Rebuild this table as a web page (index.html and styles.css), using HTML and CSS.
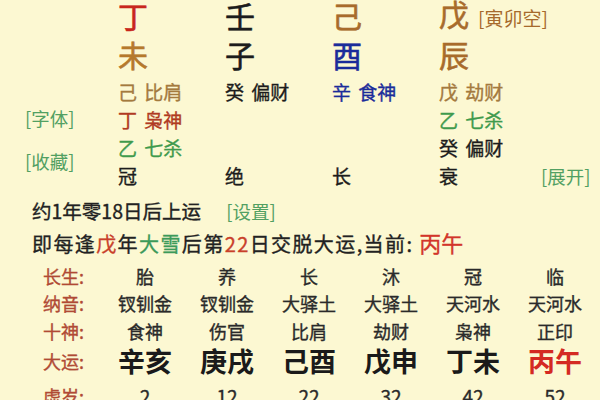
FILE: index.html
```html
<!DOCTYPE html>
<html lang="zh-CN">
<head>
<meta charset="utf-8">
<title>排盘</title>
<link rel="stylesheet" href="styles.css">
</head>
<body>
<div class="page">
  <div class="pillars">
    <div class="side">
      <span class="link first">[字体]</span>
      <span class="link second">[收藏]</span>
    </div>
    <span class="link expand">[展开]</span>

    <div></div>
    <div class="stem red">丁</div>
    <div class="stem black">壬</div>
    <div class="stem brown">己</div>
    <div class="stem brown">戊<span class="kong">[寅卯空]</span></div>
    <div></div>

    <div></div>
    <div class="stem orange">未</div>
    <div class="stem black">子</div>
    <div class="stem blue">酉</div>
    <div class="stem brown">辰</div>
    <div></div>

    <div></div>
    <div class="hide tan">己 比肩</div>
    <div class="hide black">癸 偏财</div>
    <div class="hide blue">辛 食神</div>
    <div class="hide tan">戊 劫财</div>
    <div></div>

    <div class="hide rust">丁 枭神</div>
    <div></div>
    <div></div>
    <div class="hide green">乙 七杀</div>
    <div></div>

    <div class="hide green">乙 七杀</div>
    <div></div>
    <div></div>
    <div class="hide black">癸 偏财</div>
    <div></div>

    <div class="hide black">冠</div>
    <div class="hide black">绝</div>
    <div class="hide black">长</div>
    <div class="hide black">衰</div>
  </div>

  <div class="info">
    <p class="line first-line">约1年零18日后上运 <span class="set">[设置]</span></p>
    <p class="line second-line">即每逢<span class="red2">戊</span>年<span class="green2">大雪</span>后第<span class="red2">22</span>日交脱大运,当前: <span class="now">丙午</span></p>
  </div>

  <div class="table">
    <div class="label">长生:</div>
    <div class="val">胎</div><div class="val">养</div><div class="val">长</div><div class="val">沐</div><div class="val">冠</div><div class="val">临</div>

    <div class="label">纳音:</div>
    <div class="val">钗钏金</div><div class="val">钗钏金</div><div class="val">大驿土</div><div class="val">大驿土</div><div class="val">天河水</div><div class="val">天河水</div>

    <div class="label">十神:</div>
    <div class="val">食神</div><div class="val">伤官</div><div class="val">比肩</div><div class="val">劫财</div><div class="val">枭神</div><div class="val">正印</div>

    <div class="label">大运:</div>
    <div class="val big">辛亥</div><div class="val big">庚戌</div><div class="val big">己酉</div><div class="val big">戊申</div><div class="val big">丁未</div><div class="val big cur">丙午</div>

    <div class="label">虚岁:</div>
    <div class="val num">2</div><div class="val num">12</div><div class="val num">22</div><div class="val num">32</div><div class="val num">42</div><div class="val num">52</div>
  </div>
</div>
</body>
</html>
```

FILE: styles.css
```css
html, body {
  margin: 0;
  padding: 0;
  background: #fcf8d2;
}
body {
  width: 600px;
  height: 400px;
  overflow: hidden;
  font-family: "Noto Sans CJK SC", sans-serif;
  color: #222;
  -webkit-text-stroke: 0.35px currentColor;
}
.page {
  width: 600px;
}
.pillars {
  display: grid;
  grid-template-columns: 118px 107px 107px 107px 107px 1fr;
  grid-template-rows: 30px 48px 28px 28px 28px 28px;
  align-items: center;
}
.side {
  grid-column: 1;
  grid-row: 4 / 7;
  align-self: stretch;
  display: flex;
  flex-direction: column;
  padding-left: 25px;
}
.link {
  color: #52a062;
  font-size: 18.5px;
  line-height: 28px;
  white-space: nowrap;
  -webkit-text-stroke: 0;
}
.first {
  margin-top: -2px;
}
.second {
  margin-top: 15px;
}
.expand {
  grid-column: 6;
  grid-row: 6;
  margin-left: -5px;
}
.stem {
  font-size: 30px;
  line-height: 30px;
  white-space: nowrap;
  -webkit-text-stroke: 0.6px currentColor;
}
.kong {
  font-size: 19px;
  color: #a66a2c;
  margin-left: 9px;
  -webkit-text-stroke: 0;
}
.hide {
  font-size: 19px;
  line-height: 28px;
  white-space: nowrap;
  word-spacing: 3px;
}
.red { color: #c8261c; }
.black { color: #1c1c1c; }
.brown { color: #a86b2b; }
.orange { color: #b5792c; }
.blue { color: #1b2c9a; }
.tan { color: #a47a3e; }
.rust { color: #b03a22; }
.green { color: #3f9a4c; }

.info {
  padding-left: 32px;
  margin-top: 5px;
}
.line {
  margin: 0;
  line-height: 31px;
  white-space: nowrap;
  color: #222;
}
.first-line {
  font-size: 19.5px;
}
.second-line {
  font-size: 20px;
  letter-spacing: 1.4px;
}
.set {
  color: #52a062;
  font-size: 18.5px;
  margin-left: 21px;
  letter-spacing: 0;
  -webkit-text-stroke: 0;
}
.red2 { color: #c9402a; }
.green2 { color: #3c9a5a; }
.now {
  color: #d2352a;
  font-size: 22px;
  letter-spacing: 0;
}

.table {
  display: grid;
  grid-template-columns: 104px repeat(6, 82px);
  grid-template-rows: 27px 27px 29px 30px 40px;
  align-items: center;
  margin-top: 4px;
}
.label {
  padding-left: 43px;
  font-size: 18px;
  line-height: 27px;
  color: #b04a35;
  white-space: nowrap;
}
.val {
  text-align: center;
  font-size: 18px;
  line-height: 27px;
  color: #2a2a2a;
  white-space: nowrap;
}
.val.big {
  font-size: 27px;
  line-height: 30px;
  font-weight: bold;
  color: #1a1a1a;
  -webkit-text-stroke: 0;
}
.val.cur {
  color: #d42a22;
}
.val.num {
  font-size: 19px;
  line-height: 40px;
}
.table .label:nth-last-child(7) {
  line-height: 40px;
}
```
